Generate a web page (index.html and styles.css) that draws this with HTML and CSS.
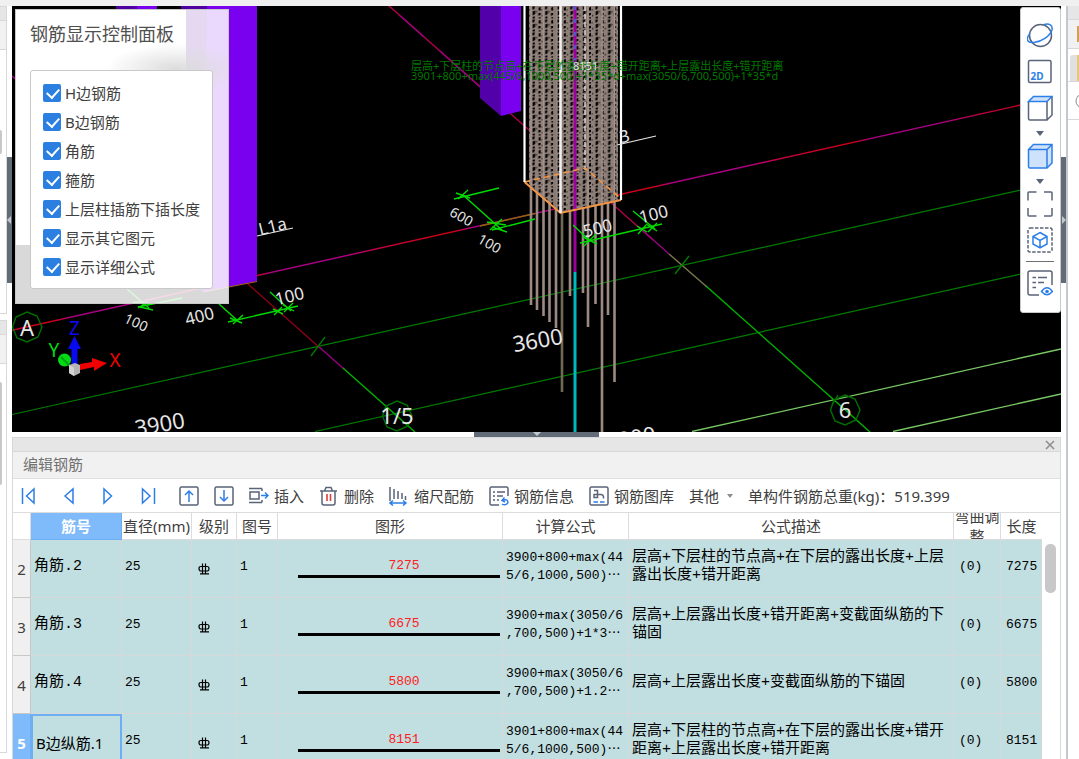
FILE: index.html
```html
<!DOCTYPE html>
<html lang="zh-CN">
<head>
  <meta charset="UTF-8">
  <meta name="viewport" content="width=device-width, initial-scale=1.0">
  <title>编辑钢筋</title>
  <link rel="stylesheet" href="styles.css">
</head>
<body>
  <!-- Left docked panels -->
  <aside class="side-left">
    <div class="left-panel left-top">
      <div class="strip"></div>
      <div class="strip-caption"></div>
      <div class="thumb"></div>
    </div>
    <div class="left-panel left-bottom">
      <div class="strip"></div>
      <div class="strip-caption"></div>
      <div class="thumb thumb-long"></div>
    </div>
    <button class="handle handle-left" aria-label="收起左侧"><svg viewBox="0 0 5 8"><path d="M4 0L0 4L4 8Z"/></svg></button>
  </aside>

  <main class="main">
    <!-- 3D view -->
    <section class="viewport">
      <svg class="scene" viewBox="12 6 1049 426" preserveAspectRatio="xMinYMin slice">
        <defs>
          <linearGradient id="axisMix" gradientUnits="userSpaceOnUse" x1="12" y1="0" x2="212" y2="0" spreadMethod="repeat">
            <stop offset="0" stop-color="#c80028"/>
            <stop offset="0.2" stop-color="#d00010"/>
            <stop offset="0.3" stop-color="#a80080"/>
            <stop offset="0.65" stop-color="#b00088"/>
            <stop offset="0.85" stop-color="#c80040"/>
            <stop offset="1" stop-color="#c80028"/>
          </linearGradient>
          <pattern id="hoops" patternUnits="userSpaceOnUse" x="528" y="6" width="12.600" height="13">
            <rect width="12.600" height="13" fill="#8f7f79"/>
            <path d="M4.400 0.600h2.600l-1 3h-1.600zM4.600 5.500l2.600-1v3.600l-2.600 1.400zM4.400 11l2.400-0.800v2.400h-2z" fill="#000"/>
            <path d="M10.600 1.800l2-1v3.800h-2zM10.400 7h2.200v1.800l-2.200 1.200zM10.800 11.200h1.800v1.400h-1.800z" fill="#000"/>
            <path d="M0.600 3.200h1v1.400h-1zM1.200 8.800h1v1.600h-1zM8.200 4.800h0.900v1.600h-0.900z" fill="#1e1a18"/>
          </pattern>
        </defs>

        <rect x="12" y="6" width="1049" height="426" fill="#000"/>

        <!-- grid lines -->
        <g fill="none" stroke="#007d00" stroke-width="1.2">
          <path d="M12 414.500L1061 181"/>
          <path d="M315 431.500L1061 265"/>
        </g>
        <g fill="none" stroke="#78c864" stroke-width="1.4">
          <path d="M692 431.500L1061 349"/>
          <path d="M893 431.500L1061 394"/>
        </g>
        <path d="M12 330.300L1061 96" stroke="url(#axisMix)" stroke-width="1.4"/>
        <path d="M480 226L535 213.500" stroke="#8a6a00" stroke-width="1.4"/>
        <g fill="none" stroke-width="1.4">
          <path d="M388 5L653 240" stroke="#b4004c"/>
          <path d="M400 15.600L424 37M440 51L480 87" stroke="#980080"/>
          <path d="M640 228L669 254" stroke="#960082"/>
          <path d="M669 254L707 287" stroke="#7d7a4a"/>
          <path d="M706 286L870 432" stroke="#00b400"/>
          <path d="M12 76L20 83" stroke="#980080"/>
          <path d="M248 284L320 348" stroke="#900018"/>
          <path d="M318 346L344 369" stroke="#980080"/>
          <path d="M343 368L415 432" stroke="#00b400"/>
          <path d="M325 337L311 356M689 256L675 274M838 395L832 405" stroke="#007800"/>
        </g>

        <!-- purple columns -->
        <path d="M116 6h21v30h-21zM181 6H207V292L181 286Z" fill="#4f00a0"/>
        <path d="M137 6h20v30h-20zM207 6H257V281L203 292Z" fill="#7a00f0"/>
        <path d="M203 292L257 281.500" stroke="#b46428" stroke-width="1"/>
        <path d="M480 6H501V116L480 98Z" fill="#5200aa"/>
        <path d="M501 6H521V111L501 116Z" fill="#7a00f0"/>

        <!-- rebars below the column -->
        <g fill="none" stroke="#9b8982" stroke-width="2.600">
          <path d="M531 180V305M537 185V310M543.500 190V316M549.500 196V322M556 200V328M570 205V296M583 205V293M588 205V327M595.500 205V304M602 203V432M608 203V315M614.500 200V382"/>
          <path d="M562 205V392" stroke="#706a55"/>
        </g>

        <!-- rebar cage -->
        <path d="M529 6H618V200L561 213L529 185Z" fill="url(#hoops)"/>
        <path d="M531 6V186M543.500 6V196M556 6V208M588 6V207M602 6V203M614.500 6V200" stroke="#a3928b" stroke-width="1.600" fill="none"/>
        <path d="M555 6V208" stroke="#8b7a74" stroke-width="3"/>
        <path d="M585 6V170" stroke="#d8d4d2" stroke-width="1.500" stroke-dasharray="5 3"/>
        <path d="M575 6V272" stroke="#a000a0" stroke-width="3"/>
        <path d="M575 6V60" stroke="#5a50d8" stroke-width="2" stroke-dasharray="4 9"/>
        <path d="M575 272V432" stroke="#00b9bf" stroke-width="3"/>
        <path d="M524.500 182L560.500 213L621 200" stroke="#f09646" stroke-width="2" fill="none"/>
        <path d="M524.500 182L585 168L620 198" stroke="#f09646" stroke-width="1.600" stroke-dasharray="6 4" fill="none"/>
        <path d="M524.500 6V182M621 6V200" stroke="#fff" stroke-width="2.200"/>
        <path d="M560.500 6V213" stroke="#f0f0f0" stroke-width="2.600"/>

        <!-- dimension marks -->
        <g fill="none" stroke="#00dc00" stroke-width="1.400">
          <path d="M573 225L590 241M580 243L662 224M633 211L655 229"/>
          <path d="M583 237l14 7M596 234l-12 12M637 226l10 6M646 225l-8 9M646 224l11 7M657 223l-9 9"/>
          <path d="M454 199L499 188M463 195L502 230M492 230L535 219"/>
          <path d="M456 193l14 5M468 190l-10 9M487 222l19 3M502 219l-12 11M492 227l15 5"/>
          <path d="M127 289L149 308M138 307L182 298M133 302l20 2M140 307l13 3M147 302l-9 6"/>
          <path d="M219 304L238 321M228 322L298 306M270 292L291 311"/>
          <path d="M230 318l12 5M243 315l-10 9M273 309l10 5M282 307l-8 8M283 305l11 6M293 303l-9 9"/>
        </g>

        <!-- axis bubbles -->
        <g fill="none" stroke="#007000" stroke-width="1.400">
          <path d="M27 312L37 316L42 327L38 337L27 342L17 338L12.500 327L16 317Z"/>
          <path d="M397 401L407 405L412 416L408 426L397 431L387 427L382.500 416L386 406Z"/>
          <path d="M845 395L855 399L860 410L856 420L845 425L835 421L830.500 410L834 400Z"/>
        </g>

        <g class="mark" text-anchor="middle">
          <text x="27" y="336" class="mark-lg">A</text>
          <text x="397" y="424" class="mark-lg">1/5</text>
          <text x="845" y="418" class="mark-lg">6</text>
          <text class="mark-lg" transform="translate(539 348) rotate(-10)">3600</text>
          <text class="mark-lg" transform="translate(161 432) rotate(-10)">3900</text>
          <text class="mark-lg" transform="translate(632 446) rotate(-10)">3900</text>
          <text transform="translate(599 234) rotate(-14)">500</text>
          <text transform="translate(655 220) rotate(-14)">100</text>
          <text transform="translate(291 302) rotate(-14)">100</text>
          <text transform="translate(201 322) rotate(-14)">400</text>
          <text class="mark-sm" transform="translate(459 221) rotate(30)">600</text>
          <text class="mark-sm" transform="translate(487 248) rotate(30)">100</text>
          <text class="mark-sm" transform="translate(134 327) rotate(25)">100</text>
          <text transform="translate(626 142) rotate(-14)">3</text>
          <text transform="translate(274 232) rotate(-14)">L1a</text>
        </g>
        <path d="M617 145L656 136M257 236L293 228" stroke="#e6e6e6" stroke-width="1.200"/>

        <g class="formula">
          <text x="411" y="70">层高+下层柱的节点高+在下层的露出长度+错开距离+上层露出长度+错开距离</text>
          <text x="411" y="80">3901+800+max(445/6,1000,500)+1*35*d+max(3050/6,700,500)+1*35*d</text>
        </g>
        <text x="573" y="70" class="bar-length">8151</text>

        <!-- view triad -->
        <path d="M80 364L92 362V358L107 363L94 371V367L80 370Z" fill="#f00000"/>
        <path d="M71.500 366V349H68L74.500 336L81 349H77.500V366Z" fill="#0a0af0"/>
        <circle cx="64.500" cy="360" r="6.500" fill="#00dc14"/>
        <path d="M61 357L71 367" stroke="#00a010" stroke-width="2"/>
        <path d="M69 365l6-2 5 2v8l-6 3-5-3z" fill="#b4b4b4"/>
        <path d="M69 365l5 2.500v8.500l-5-3z" fill="#d2d2d2"/>
        <g class="triad" text-anchor="middle">
          <text x="74.500" y="335" fill="#0a0af0">Z</text>
          <text x="54" y="357" fill="#00dc14">Y</text>
          <text x="115" y="367" fill="#f00000">X</text>
        </g>
      </svg>

      <!-- Display control panel -->
      <form class="control-panel">
        <h2>钢筋显示控制面板</h2>
        <div class="options">
          <label><input type="checkbox" checked>H边钢筋</label>
          <label><input type="checkbox" checked>B边钢筋</label>
          <label><input type="checkbox" checked>角筋</label>
          <label><input type="checkbox" checked>箍筋</label>
          <label><input type="checkbox" checked>上层柱插筋下插长度</label>
          <label><input type="checkbox" checked>显示其它图元</label>
          <label><input type="checkbox" checked>显示详细公式</label>
        </div>
      </form>

      <!-- View tools -->
      <nav class="view-tools">
        <button aria-label="动态观察">
          <svg viewBox="0 0 26 26"><circle cx="13.500" cy="12.500" r="11" class="ln"/><path class="bl" d="M17 1.500C22 0 26 2 25 7C23 13 15 18.500 7 19.500C2 20 -1 18 1 13.500L3 10"/></svg>
        </button>
        <button aria-label="二维">
          <svg viewBox="0 0 26 26"><rect x="1.500" y="1.500" width="22.500" height="22" rx="1.500" class="ln"/><text x="3.500" y="20.500" class="icon-text">2D</text></svg>
        </button>
        <button aria-label="视图方向">
          <svg viewBox="0 0 26 26"><path class="ln" d="M1.500 6.500V23.500Q1.500 25 3 25H20V6.500M20 25L25 20V2"/><path class="bl soft" d="M1.500 6.500L6.500 1.500H25L20 6.500Z"/></svg>
        </button>
        <button class="drop" aria-label="更多方向"><svg viewBox="0 0 8 5"><path d="M0 0H8L4 5Z"/></svg></button>
        <button aria-label="显示方式">
          <svg viewBox="0 0 26 26"><path class="bl soft" d="M1.500 6.500L6.500 1.500H25V20L20 25H3Q1.500 25 1.500 23.500ZM1.500 6.500H20V25M20 6.500L25 1.500"/></svg>
        </button>
        <button class="drop" aria-label="更多显示"><svg viewBox="0 0 8 5"><path d="M0 0H8L4 5Z"/></svg></button>
        <button aria-label="全屏">
          <svg viewBox="0 0 26 26"><path class="ln" d="M1 9.500V2Q1 1 2 1H9.500M17 1H24Q25 1 25 2V9.500M25 17V24Q25 25 24 25H17M9.500 25H2Q1 25 1 24V17"/></svg>
        </button>
        <button aria-label="隔离图元">
          <svg viewBox="0 0 26 26"><rect x="1" y="1" width="24" height="24" rx="2" class="ln" stroke-dasharray="3.500 1.500"/><path class="bl" d="M13 5.500L20 9.500V17L13 21L6 17V9.500ZM6 9.500L13 13.500L20 9.500M13 13.500V21"/></svg>
        </button>
        <hr>
        <button aria-label="显示设置">
          <svg viewBox="0 0 26 26"><path class="ln" d="M12 25H3Q1 25 1 23V3Q1 1 3 1H23Q25 1 25 3V15M5.500 7.500H9M11 7.500H20M5.500 12.500H9M11 12.500H17M5.500 17.500H9"/><path class="bl" d="M14.500 21.500Q20 14 25.500 21.500Q20 28 14.500 21.500Z"/><circle cx="20" cy="21.500" r="1.800" fill="#2d7fe8"/></svg>
        </button>
      </nav>
    </section>

    <div class="splitter">
      <button class="handle-bottom" aria-label="收起下方"><svg viewBox="0 0 8 4"><path d="M0 0H8L4 4Z"/></svg></button>
    </div>

    <!-- Rebar editor -->
    <section class="dock">
      <div class="dock-bar"><button class="close" aria-label="关闭"><svg viewBox="0 0 10 10"><path d="M1 1L9 9M9 1L1 9"/></svg></button></div>
      <h2 class="dock-title">编辑钢筋</h2>
      <div class="toolbar">
        <div class="nav-group">
          <button aria-label="首行"><svg viewBox="0 0 20 20"><path class="bl" d="M3.500 2V18M15 3V17L7.500 10Z"/></svg></button>
          <button aria-label="上一行"><svg viewBox="0 0 20 20"><path class="bl" d="M14 3V17L6 10Z"/></svg></button>
          <button aria-label="下一行"><svg viewBox="0 0 20 20"><path class="bl" d="M5 3V17L12.500 10Z"/></svg></button>
          <button aria-label="末行"><svg viewBox="0 0 20 20"><path class="bl" d="M3.500 3V17L11 10ZM15.500 2V18"/></svg></button>
          <button aria-label="上移"><svg viewBox="0 0 20 20"><rect x="1" y="1" width="18" height="18" rx="1.500" class="ln"/><path class="bl" d="M10 16V5M6 9L10 5L14 9"/></svg></button>
        </div>
        <button aria-label="下移"><svg viewBox="0 0 20 20"><rect x="1" y="1" width="18" height="18" rx="1.500" class="ln"/><path class="bl" d="M10 4V15M6 11L10 15L14 11"/></svg></button>
        <button class="tool"><svg viewBox="0 0 20 20"><path class="ln" d="M0 2.500H13M0 16.500H13M1 6H10V13H1ZM13 2.500V5M13 14V16.500"/><path class="bl" d="M12 9.500H19M16 6.500L19 9.500L16 12.500"/></svg>插入</button>
        <button class="tool"><svg viewBox="0 0 20 20"><path class="ln" d="M1 5H18M3 5V17Q3 19 5 19H14Q16 19 16 17V5M5.500 5L7 1.500H12L13.500 5"/><path d="M8 8V15M11.500 8V15" fill="none" stroke="#e03c3c" stroke-width="1.600"/></svg>删除</button>
        <button class="tool"><svg viewBox="0 0 20 20"><path class="ln" d="M1 1V15M5 3V13M9 5V13M13 7V13M16.500 10V14"/><path class="bl" d="M1 17H17M4 14.500L1 17L4 19.500M14 14.500L17 17L14 19.500"/></svg>缩尺配筋</button>
        <button class="tool"><svg viewBox="0 0 20 20"><path class="ln" d="M10 19H2.500Q1 19 1 17.500V2.500Q1 1 2.500 1H17.500Q19 1 19 2.500V10M4 6H6M8 6H16M4 10H6M8 10H14M4 14H6M8 14H10"/><path class="bl" d="M15.500 11.500L13 14.500L16 16M13 14.500Q19 12 19 17M13 18Q16 20 19 17"/></svg>钢筋信息</button>
        <button class="tool"><svg viewBox="0 0 20 20"><rect x="1" y="1" width="18" height="18" rx="1.500" class="ln"/><path class="ln" d="M5 4.500H8.500V11.500H5V8.500H11Q15 8 14.500 12.500"/><path class="bl" d="M4.500 16H9M11 16H15.500"/></svg>钢筋图库</button>
        <button class="tool other">其他<svg viewBox="0 0 6 4"><path d="M0 0H6L3 4Z"/></svg></button>
        <span class="total">单构件钢筋总重(kg)：519.399</span>
      </div>

      <div class="table-area">
        <table>
          <colgroup>
            <col class="c-row"><col class="c-name"><col class="c-dia"><col class="c-grade"><col class="c-no">
            <col class="c-shape"><col class="c-calc"><col class="c-desc"><col class="c-bend"><col class="c-len">
          </colgroup>
          <thead>
            <tr>
              <th></th>
              <th class="active">筋号</th>
              <th>直径(mm)</th>
              <th>级别</th>
              <th>图号</th>
              <th>图形</th>
              <th>计算公式</th>
              <th>公式描述</th>
              <th><div class="wrap">弯曲调整</div></th>
              <th>长度</th>
            </tr>
          </thead>
          <tbody>
            <tr>
              <th>2</th>
              <td class="name">角筋.2</td>
              <td>25</td>
              <td class="grade"><svg viewBox="0 0 12 12"><path d="M3 3.500H9Q11 3.500 11 5.500Q11 8 9 8H3Q1 8 1 5.500Q1 3.500 3 3.500ZM4.500 0.500V11M7.500 0.500V11M2 10.800H11"/></svg></td>
              <td>1</td>
              <td class="shape"><div>7275</div></td>
              <td>3900+800+max(44<br>5/6,1000,500)<span class="dots">…</span></td>
              <td class="desc">层高+下层柱的节点高+在下层的露出长度+上层露出长度+错开距离</td>
              <td>(0)</td>
              <td>7275</td>
            </tr>
            <tr>
              <th>3</th>
              <td class="name">角筋.3</td>
              <td>25</td>
              <td class="grade"><svg viewBox="0 0 12 12"><path d="M3 3.500H9Q11 3.500 11 5.500Q11 8 9 8H3Q1 8 1 5.500Q1 3.500 3 3.500ZM4.500 0.500V11M7.500 0.500V11M2 10.800H11"/></svg></td>
              <td>1</td>
              <td class="shape"><div>6675</div></td>
              <td>3900+max(3050/6<br>,700,500)+1*3<span class="dots">…</span></td>
              <td class="desc">层高+上层露出长度+错开距离+变截面纵筋的下锚固</td>
              <td>(0)</td>
              <td>6675</td>
            </tr>
            <tr>
              <th>4</th>
              <td class="name">角筋.4</td>
              <td>25</td>
              <td class="grade"><svg viewBox="0 0 12 12"><path d="M3 3.500H9Q11 3.500 11 5.500Q11 8 9 8H3Q1 8 1 5.500Q1 3.500 3 3.500ZM4.500 0.500V11M7.500 0.500V11M2 10.800H11"/></svg></td>
              <td>1</td>
              <td class="shape"><div>5800</div></td>
              <td>3900+max(3050/6<br>,700,500)+1.2<span class="dots">…</span></td>
              <td class="desc">层高+上层露出长度+变截面纵筋的下锚固</td>
              <td>(0)</td>
              <td>5800</td>
            </tr>
            <tr>
              <th class="active">5</th>
              <td class="selected">B边纵筋.1</td>
              <td>25</td>
              <td class="grade"><svg viewBox="0 0 12 12"><path d="M3 3.500H9Q11 3.500 11 5.500Q11 8 9 8H3Q1 8 1 5.500Q1 3.500 3 3.500ZM4.500 0.500V11M7.500 0.500V11M2 10.800H11"/></svg></td>
              <td>1</td>
              <td class="shape"><div>8151</div></td>
              <td>3901+800+max(44<br>5/6,1000,500)<span class="dots">…</span></td>
              <td class="desc">层高+下层柱的节点高+在下层的露出长度+错开距离+上层露出长度+错开距离</td>
              <td>(0)</td>
              <td>8151</td>
            </tr>
          </tbody>
        </table>
        <div class="scrollbar"><div class="scroll-thumb"></div></div>
      </div>
    </section>
  </main>

  <!-- Right docked panel -->
  <aside class="side-right">
    <div class="right-gap">
      <button class="handle" aria-label="收起右侧"><svg viewBox="0 0 5 8"><path d="M1 0L5 4L1 8Z"/></svg></button>
    </div>
    <div class="right-panel">
      <div class="strip"></div>
      <div class="strip-caption"><span class="orange"></span></div>
      <div class="tab"><span></span></div>
      <div class="search"><svg viewBox="0 0 10 16"><circle cx="9" cy="8" r="7"/></svg></div>
    </div>
  </aside>
</body>
</html>
```

FILE: styles.css
```css
* {
  box-sizing: border-box;
}

body {
  margin: 0;
  padding-top: 6px;
  height: 100vh;
  display: flex;
  overflow: hidden;
  background-color: #f0f0f0;
  color: #404040;
  font-family: "Noto Sans", "Noto Sans CJK SC", sans-serif;
  font-size: 15px;
  line-height: 20px;
}

button {
  padding: 0;
  border: 0;
  background: none;
  color: inherit;
  font: inherit;
  cursor: pointer;
}

svg {
  display: block;
}

h2 {
  margin: 0;
  font-weight: normal;
}

.ln {
  fill: none;
  stroke: #5a6478;
  stroke-width: 1.5;
}

.bl {
  fill: none;
  stroke: #2d7fe8;
  stroke-width: 1.5;
}

.soft {
  fill: #cfe2fb;
}

/* Left side */
.side-left {
  position: relative;
  flex: 0 0 12px;
  display: flex;
  flex-direction: column;
  gap: 6px;
  padding-bottom: 6px;
  background-color: #fff;
}

.left-panel {
  width: 7px;
  background-color: #fff;
  border: 1px solid #d8d8d8;
  border-left: 0;
}

.left-top {
  flex: 0 0 308px;
}

.left-bottom {
  flex: 1;
}

.strip {
  height: 14px;
  background-color: #e6e6e6;
  border-bottom: 1px solid #d8d8d8;
}

.strip-caption {
  height: 29px;
  background-color: #f1f1f1;
  border-bottom: 1px solid #d8d8d8;
}

.thumb {
  width: 2px;
  height: 24px;
  margin-top: 80px;
  background-color: #c8c8c8;
  border-radius: 0 2px 2px 0;
}

.thumb-long {
  height: 103px;
  margin-top: 18px;
}

.handle {
  width: 5px;
  height: 126px;
  background-color: #616c78;
}

.handle svg {
  width: 5px;
  height: 8px;
  fill: #c3c8cf;
}

.handle-left {
  position: absolute;
  right: 0;
  top: 151px;
}

/* Main column */
.main {
  flex: 1;
  min-width: 0;
  display: flex;
  flex-direction: column;
}

.viewport {
  position: relative;
  flex: 1;
  min-height: 0;
  overflow: hidden;
  background-color: #000;
}

.scene {
  width: 100%;
  height: 100%;
}

.mark {
  fill: #e6e6e6;
  font-size: 17px;
}

.mark-lg {
  font-size: 22px;
}

.mark-sm {
  font-size: 14px;
}

.formula {
  fill: #007800;
  font-size: 11px;
}

.bar-length {
  fill: #d8e6d8;
  font-size: 11px;
}

.triad {
  font-size: 19px;
}

/* Display control panel */
.control-panel {
  position: absolute;
  left: 3px;
  top: 3px;
  padding: 13px 15px 14px 14px;
  border: 1px solid #c8c8c8;
  background:
    radial-gradient(closest-side, #dcdcdc, #dcdcdc00) 90px 34px / 140px 50px no-repeat,
    linear-gradient(#fff, #fff) 0 0 / 170px 235px no-repeat,
    rgba(255, 255, 255, 0.85);
}

.control-panel h2 {
  color: #505050;
  font-size: 18px;
  line-height: 22px;
}

.options {
  display: flex;
  flex-direction: column;
  margin-top: 25px;
  padding: 7px 12px;
  border: 1px solid #c8c8c8;
  border-radius: 3px;
  background-color: #fff;
}

.options label {
  display: flex;
  align-items: center;
  gap: 4px;
  height: 29px;
}

.options input {
  appearance: none;
  width: 18px;
  height: 18px;
  margin: 0;
  border-radius: 2px;
  background-color: #2b7fe0;
}

.options input:checked::before {
  content: "";
  display: block;
  width: 6px;
  height: 10px;
  margin: 2px 0 0 6px;
  border: solid #fff;
  border-width: 0 2px 2px 0;
  transform: rotate(42deg);
}

/* View tools */
.view-tools {
  position: absolute;
  right: 0;
  top: 1px;
  display: flex;
  flex-direction: column;
  align-items: center;
  gap: 10px;
  width: 41px;
  padding: 15px 2px 16px 0;
  border: 1px solid #c8c8c8;
  border-radius: 3px;
  background-color: #fff;
}

.view-tools svg {
  width: 26px;
  height: 26px;
}

.view-tools .drop svg {
  width: 8px;
  height: 5px;
  margin-bottom: -3px;
  fill: #5a6478;
}

.view-tools hr {
  width: 28px;
  margin: -2px 0;
  border: 0;
  border-top: 1px solid #707070;
}

.icon-text {
  fill: #2d7fe8;
  font-size: 10px;
  font-weight: bold;
}

.splitter {
  display: flex;
  justify-content: center;
  height: 5px;
  background-color: #fff;
}

.handle-bottom {
  display: flex;
  justify-content: center;
  width: 125px;
  height: 5px;
  background-color: #616c78;
}

.handle-bottom svg {
  width: 8px;
  height: 4px;
  fill: #c3c8cf;
}

/* Rebar editor */
.dock {
  flex: 0 0 322px;
  display: flex;
  flex-direction: column;
  overflow: hidden;
  background-color: #fff;
  border: 1px solid #d8d8d8;
  border-bottom: 0;
}

.dock-bar {
  flex: 0 0 14px;
  display: flex;
  justify-content: flex-end;
  align-items: center;
  padding-right: 5px;
  background-color: #e6e6e6;
  border-bottom: 1px solid #d8d8d8;
}

.close svg {
  width: 10px;
  height: 10px;
  fill: none;
  stroke: #8c8c8c;
  stroke-width: 1.5;
}

.dock-title {
  padding: 2px 10px 4px;
  background-color: #f1f1f1;
  border-bottom: 1px solid #e0e0e0;
  color: #707070;
  font-size: 15px;
  line-height: 20px;
}

.toolbar {
  flex: 0 0 34px;
  display: flex;
  align-items: center;
  gap: 15px;
  padding-left: 6px;
  border-bottom: 1px solid #dcdcdc;
  white-space: nowrap;
}

.nav-group {
  display: flex;
  gap: 20px;
}

.toolbar svg {
  width: 20px;
  height: 20px;
}

.tool {
  display: flex;
  align-items: center;
  gap: 5px;
}

.toolbar .other {
  gap: 8px;
}

.toolbar .other svg {
  width: 6px;
  height: 4px;
  fill: #8c8c8c;
}

.table-area {
  display: flex;
}

table {
  flex: 1;
  width: 100%;
  table-layout: fixed;
  border-collapse: separate;
  border-spacing: 0;
}

.c-row { width: 18px; }
.c-name { width: 91px; }
.c-dia { width: 70px; }
.c-grade { width: 45px; }
.c-no { width: 41px; }
.c-shape { width: 225px; }
.c-calc { width: 126px; }
.c-bend { width: 47px; }
.c-len { width: 41px; }

th {
  padding: 0;
  border-right: 1px solid #dcdcdc;
  border-bottom: 1px solid #dcdcdc;
  font-weight: normal;
  white-space: nowrap;
}

thead th {
  height: 27px;
}

thead th:last-child {
  border-right: 0;
}

th.active {
  background-color: #7fbafa;
  border-color: #6eaef2;
  color: #fff;
  font-weight: bold;
}

.wrap {
  display: flex;
  align-items: center;
  height: 26px;
  overflow: hidden;
  text-align: center;
  white-space: normal;
}

tbody th {
  background-color: #f0f0f0;
  border-color: #c8c8c8;
}

tbody th.active {
  background-color: #7fbafa;
}

td {
  height: 58px;
  padding: 0 3px 3px;
  overflow: hidden;
  background-color: #c1dee0;
  border-right: 1px solid #d8d8d8;
  border-bottom: 1px solid #d8d8d8;
  color: #000;
  font-family: "Liberation Mono", "Noto Sans CJK SC", monospace;
  font-size: 13px;
  line-height: 18px;
  white-space: nowrap;
}

td:nth-child(9),
td:last-child {
  padding-left: 5px;
}

td.name,
td.desc {
  font-size: 15px;
}

td.desc {
  white-space: normal;
  word-break: break-all;
}

td.selected {
  padding-bottom: 0;
  border: 2px solid #6eaef2;
  font-family: "Noto Sans", "Noto Sans CJK SC", sans-serif;
  font-size: 15px;
}

td.grade {
  padding: 0 6px;
}

.grade svg {
  width: 12px;
  height: 12px;
  fill: none;
  stroke: #000;
  stroke-width: 1.2;
}

.dots {
  font-family: "Noto Sans CJK SC", sans-serif;
  line-height: 1;
}

td.shape {
  padding: 0 2px 3px 20px;
}

.shape div {
  padding-left: 10px;
  border-bottom: 3px solid #000;
  color: #ff2020;
  text-align: center;
}

.scrollbar {
  flex: 0 0 18px;
  padding: 31px 4px 0 3px;
  background-color: #fff;
}

.scroll-thumb {
  height: 49px;
  border-radius: 5px;
  background-color: #c8c8c8;
}

/* Right side */
.side-right {
  flex: 0 0 18px;
  min-width: 0;
  display: flex;
  overflow: hidden;
  background-color: #fff;
}

.right-gap {
  flex: 0 0 5px;
  padding-top: 151px;
}

.right-panel {
  flex: 1;
  min-width: 0;
  border-left: 2px solid #c3c8cf;
}

.right-panel .orange {
  display: block;
  width: 2px;
  height: 16px;
  margin-left: 9px;
  background-color: #d2a050;
}

.right-panel .strip-caption {
  padding-top: 6px;
}

.tab {
  height: 33px;
  padding: 6px 0 0 2px;
  border-bottom: 1px solid #d8d8d8;
}

.tab span {
  display: block;
  height: 26px;
  border-radius: 3px 0 0 0;
  background-color: #e0e0e0;
  border-right: 2px solid #e6c878;
}

.search {
  height: 38px;
  padding-top: 11px;
  border-bottom: 1px solid #d8d8d8;
}

.search svg {
  width: 10px;
  height: 16px;
  margin-left: 6px;
  fill: none;
  stroke: #8c8c8c;
}
```
